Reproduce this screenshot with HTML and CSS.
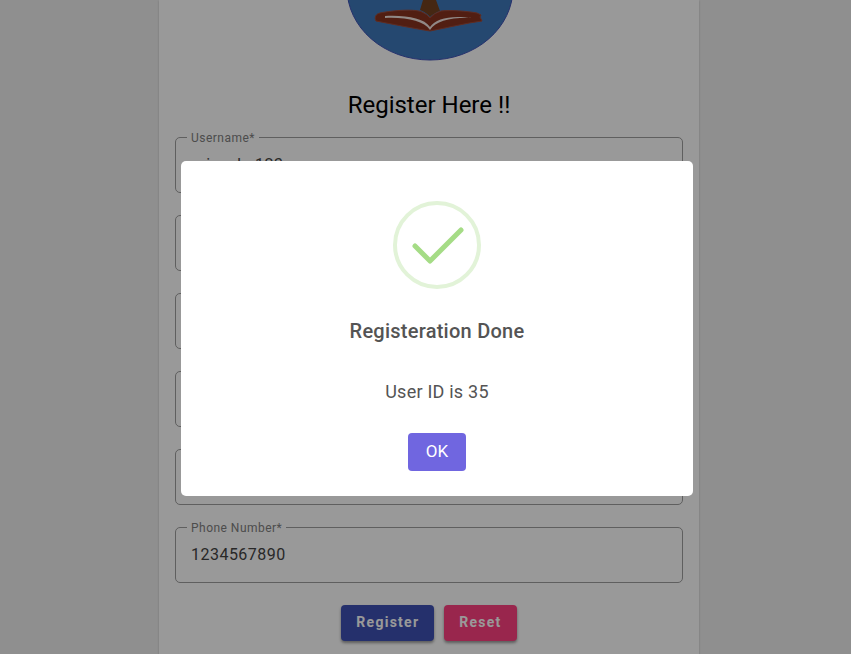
FILE: index.html
```html
<!DOCTYPE html>
<html lang="en">
<head>
<meta charset="utf-8">
<title>Register</title>
<link rel="stylesheet" href="styles.css">
</head>
<body>
<main class="page">
  <section class="card">
    <svg class="logo" viewBox="0 0 168 62" aria-hidden="true">
      <ellipse cx="84" cy="-12" rx="83" ry="72" fill="#3e79bb" stroke="#3f51b5"/>
      <path d="M77 0H90L94 11C90 12 86 15 84 17C82 14 79 12 74 10Z" fill="#744120"/>
      <path d="M34 13C48 10 70 9 76 12Q81 14 84 18Q88 13 95 11C105 10 120 11 131 13L135 15L134 17L136 21C120 23 100 28 84 31C65 28 46 24 30 21C28 17 30 14 34 13Z" fill="#87321f" stroke="#a04a38"/>
      <path d="M39 16C60 15 78 18 84 27C90 18 105 15 127 18C105 17 90 21 84 30C78 21 60 17 39 18Z" fill="#f2e5e0"/>
    </svg>
    <h1 class="heading">Register Here !!</h1>
    <form class="form">
      <div class="field"><label for="username">Username*</label><input id="username" type="text" value="priyanka123"></div>
      <div class="field"><input type="password" aria-label="Password"></div>
      <div class="field"><input type="text" aria-label="First name"></div>
      <div class="field"><input type="text" aria-label="Last name"></div>
      <div class="field"><input type="email" aria-label="Email"></div>
      <div class="field"><label for="phone">Phone Number*</label><input id="phone" type="tel" value="1234567890"></div>
      <div class="actions">
        <button class="button primary" type="submit">Register</button>
        <button class="button accent" type="reset">Reset</button>
      </div>
    </form>
  </section>
</main>
<div class="overlay">
  <div class="dialog" role="dialog" aria-labelledby="dialog-title">
    <svg class="success" viewBox="0 0 88 88" aria-hidden="true">
      <circle cx="44" cy="44" r="42" fill="none" stroke="#e2f3d8" stroke-width="4"/>
      <path d="M22 45L37 60L68 29" fill="none" stroke="#a5dc86" stroke-width="5" stroke-linecap="round" stroke-linejoin="round"/>
    </svg>
    <h2 class="title" id="dialog-title">Registeration Done</h2>
    <p class="message">User ID is 35</p>
    <button class="confirm" type="button">OK</button>
  </div>
</div>
</body>
</html>
```
FILE: styles.css
```css
* { box-sizing: border-box; }
body {
  margin: 0;
  height: 100vh;
  overflow: hidden;
  background: #eee;
  color: #000;
  font-family: Roboto, "Liberation Sans", sans-serif;
}
.page {
  display: flex;
  justify-content: center;
  min-height: 100vh;
  padding-left: 7px;
}
.card {
  display: flex;
  flex-direction: column;
  width: 100%;
  max-width: 540px;
  padding: 0 16px 16px;
  background: #fff;
  box-shadow: 0 1px 2px rgba(0, 0, 0, .2);
}
.logo {
  align-self: center;
  width: 168px;
  height: 62px;
  margin-left: 2px;
}
.heading {
  margin: 27px 0 16px;
  font-size: 24px;
  font-weight: 400;
  line-height: 32px;
  text-align: center;
}
.form {
  display: flex;
  flex-direction: column;
  gap: 22px;
}
.field {
  position: relative;
  height: 56px;
  padding: 0 15px;
  border: 1px solid #9e9e9e;
  border-radius: 5px;
}
.field label {
  position: absolute;
  top: -8px;
  left: 11px;
  padding: 0 4px;
  background: #fff;
  color: #808080;
  font-size: 12px;
  letter-spacing: .04em;
  line-height: 16px;
}
.field input {
  display: block;
  width: 100%;
  height: 100%;
  padding: 0 0 2px;
  border: 0;
  outline: 0;
  background: none;
  color: #444;
  font: 16px Roboto, "Liberation Sans", sans-serif;
  letter-spacing: .03em;
}
.actions {
  display: flex;
  justify-content: center;
  gap: 10px;
}
.button {
  height: 36px;
  padding: 0 15px 2px;
  border: 0;
  border-radius: 4px;
  color: #fff;
  font: 700 14px Roboto, "Liberation Sans", sans-serif;
  letter-spacing: .09em;
  box-shadow: 0 2px 3px rgba(0, 0, 0, .4);
}
.primary { background: #3f51b5; }
.accent { background: #ff4081; }
.overlay {
  position: fixed;
  inset: 0;
  display: flex;
  align-items: center;
  justify-content: center;
  padding: 3px 0 0 23px;
  background: rgba(0, 0, 0, .4);
}
.dialog {
  display: flex;
  flex-direction: column;
  align-items: center;
  width: 100%;
  max-width: 512px;
  padding: 40px 20px 25px;
  border-radius: 5px;
  background: #fff;
  color: #545454;
}
.success {
  width: 88px;
  height: 88px;
}
.title {
  margin: 26px 0 0;
  font-size: 20px;
  font-weight: 500;
  line-height: 32px;
  letter-spacing: .0125em;
}
.message {
  margin: 32px 0 28px;
  font-size: 18px;
  line-height: 26px;
  letter-spacing: .0125em;
}
.confirm {
  min-width: 58px;
  height: 38px;
  padding: 0 16px 2px;
  border: 0;
  border-radius: 4px;
  background: #7066e0;
  color: #fff;
  font: 17px Roboto, "Liberation Sans", sans-serif;
}
```
